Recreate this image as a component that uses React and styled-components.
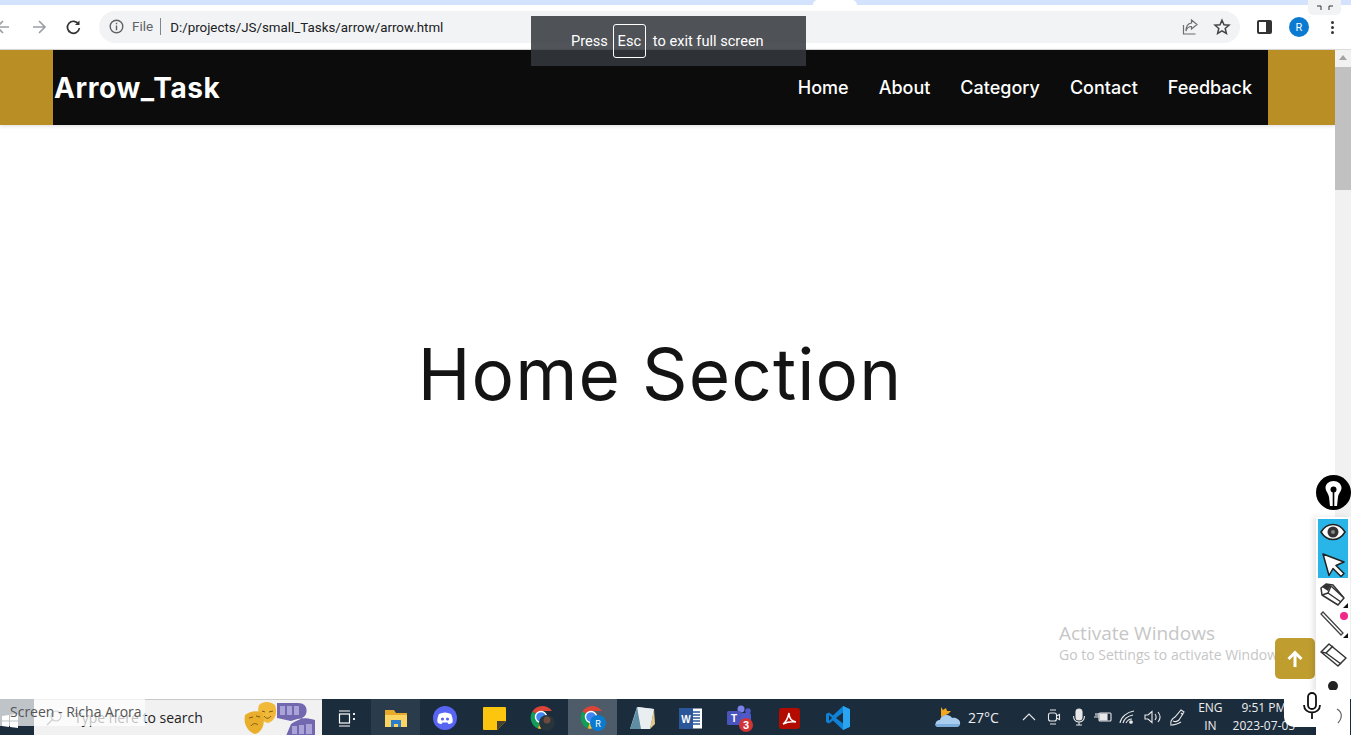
import styled, { createGlobalStyle } from "styled-components";

const GlobalStyle = createGlobalStyle`
  html, body {
    margin: 0;
    padding: 0;
    background: #fff;
    overflow: hidden;
  }
  * {
    box-sizing: border-box;
  }
`;

const Screen = styled.div`
  position: relative;
  width: 1351px;
  height: 735px;
  overflow: hidden;
  display: flex;
  flex-direction: column;
  font-family: "Inter", "Liberation Sans", sans-serif;
`;

/* browser chrome */
const TabStrip = styled.div`
  height: 5px;
  background: #d3e3fd;
  display: flex;
  flex-shrink: 0;
  padding-left: 813px;
`;
const WhiteTab = styled.div`
  width: 44px;
  background: #fff;
  border-radius: 8px 8px 0 0;
`;
const Toolbar = styled.div`
  height: 45px;
  flex-shrink: 0;
  background: #fff;
  border-bottom: 1px solid #dcdcdc;
  display: flex;
  align-items: center;
  padding: 0 8px 0 0;
`;
const NavIcons = styled.div`
  width: 99px;
  display: flex;
  align-items: center;
  flex-shrink: 0;
`;
const NavButton = styled.div`
  width: 17px;
  height: 16px;
  display: flex;
  margin-left: ${(p) => p.$left}px;
`;
const Omnibox = styled.div`
  width: 1141px;
  height: 32px;
  margin-top: -1px;
  border-radius: 16px;
  background: #f1f3f4;
  display: flex;
  align-items: center;
  padding: 0 9px 0 10px;
`;
const SiteLabel = styled.span`
  font-family: "Roboto", sans-serif;
  font-size: 13.5px;
  color: #5f6368;
  margin-left: 8px;
  padding-right: 7px;
  border-right: 1px solid #80868b;
  line-height: 17px;
`;
const Url = styled.span`
  font-family: "Roboto", sans-serif;
  font-size: 13.35px;
  color: #202124;
  margin-left: 9px;
  padding-top: 1px;
  flex: 1;
`;
const OmniAction = styled.div`
  width: 18px;
  height: 18px;
  margin-left: ${(p) => p.$left || 0}px;
  display: flex;
`;
const ToolbarRight = styled.div`
  display: flex;
  align-items: center;
  margin-left: 17px;
`;
const Avatar = styled.div`
  width: 20px;
  height: 20px;
  border-radius: 50%;
  background: #0a7bd0;
  color: #fff;
  font-family: "Roboto", sans-serif;
  font-size: 11px;
  margin-left: 17px;
  display: flex;
  align-items: center;
  justify-content: center;
`;
const MenuDots = styled.div`
  display: flex;
  flex-direction: column;
  gap: 2px;
  margin-left: 22px;
  span {
    width: 3px;
    height: 3px;
    border-radius: 50%;
    background: #333;
  }
`;

/* page */
const Viewport = styled.div`
  flex: 1;
  min-height: 0;
  display: flex;
`;
const Page = styled.div`
  flex: 1;
  display: flex;
  flex-direction: column;
  background: #fff;
`;
const Header = styled.header`
  height: 75px;
  flex-shrink: 0;
  background: #b98e24;
  padding: 0 67px 0 53px;
  box-shadow: 0 1px 4px rgba(0, 0, 0, 0.14);
`;
const HeaderInner = styled.div`
  height: 100%;
  background: #0c0c0c;
  display: flex;
  align-items: center;
  justify-content: space-between;
  padding: 0 16px 0 1px;
`;
const Logo = styled.div`
  color: #fff;
  font-size: 28px;
  font-weight: 700;
  letter-spacing: 0.6px;
`;
const NavLinks = styled.nav`
  display: flex;
  gap: 30px;
`;
const NavLink = styled.a`
  color: #fff;
  font-size: 18px;
  font-weight: 500;
`;
const HomeSection = styled.section`
  flex: 1;
  display: flex;
  justify-content: center;
  padding: 199px 15px 0 0;
`;
const Title = styled.h1`
  margin: 0;
  font-size: 71px;
  font-weight: 400;
  letter-spacing: 1.1px;
  line-height: 100px;
  color: #141414;
`;
const Scrollbar = styled.div`
  width: 16px;
  flex-shrink: 0;
  background: #f1f1f1;
  display: flex;
  flex-direction: column;
  align-items: center;
  padding-top: 5px;
`;
const ScrollArrow = styled.div`
  width: 0;
  height: 0;
  border-left: 4px solid transparent;
  border-right: 4px solid transparent;
  border-bottom: 5px solid #a3a3a3;
`;
const ScrollThumb = styled.div`
  width: 100%;
  height: 123px;
  margin-top: 7px;
  background: #c1c1c1;
`;

/* windows taskbar */
const Taskbar = styled.div`
  height: 36px;
  flex-shrink: 0;
  background: #1b2c3d;
  display: flex;
  color: #fff;
`;
const StartButton = styled.div`
  width: 34px;
  flex-shrink: 0;
  padding: 13px 0 0 2px;
`;
const SearchBox = styled.div`
  width: 288px;
  flex-shrink: 0;
  background: #f1f1f1;
  border-top: 1px solid #c9c9c9;
  display: flex;
  align-items: center;
  padding-left: 12px;
  gap: 12px;
  position: relative;
`;
const SearchText = styled.span`
  font-family: "Open Sans", sans-serif;
  font-size: 14px;
  color: #222;
`;
const SearchArt = styled.div`
  position: absolute;
  left: 210px;
  top: 0;
  display: flex;
`;
const TaskIcon = styled.div`
  width: 49.2px;
  flex-shrink: 0;
  display: flex;
  align-items: center;
  justify-content: center;
  padding-top: 2px;
  background: ${(p) =>
    p.$active ? "#4d5c68" : p.$open ? "#2a3c4b" : "transparent"};
`;
const Tray = styled.div`
  display: flex;
  align-items: center;
  padding-left: 72px;
`;
const Temp = styled.span`
  font-family: "Open Sans", sans-serif;
  font-size: 14px;
  margin: 0 20px 0 7px;
  width: 29px;
  color: #eee;
  white-space: nowrap;
`;
const TrayIcon = styled.div`
  width: 24.7px;
  height: 20px;
  display: flex;
  justify-content: center;
  align-items: center;
`;
const TrayText = styled.div`
  font-family: "Open Sans", sans-serif;
  font-size: 12px;
  line-height: 18px;
  text-align: center;
  color: #eee;
  margin-left: ${(p) => p.$left}px;
  width: ${(p) => p.$width}px;
  white-space: nowrap;
  display: flex;
  flex-direction: column;
  align-items: center;
`;

/* things lying over the page */
const ExitToast = styled.div`
  position: absolute;
  left: 531px;
  top: 16px;
  width: 275px;
  height: 50px;
  background: rgba(52, 56, 62, 0.86);
  color: #fff;
  font-family: "Roboto", sans-serif;
  font-size: 14.6px;
  display: flex;
  align-items: center;
  padding-left: 40px;
`;
const EscKey = styled.span`
  width: 33px;
  height: 34px;
  margin: 0 7px 0 5px;
  border: 1px solid #fff;
  border-radius: 3px;
  display: flex;
  align-items: center;
  justify-content: center;
`;
const ExitCorner = styled.div`
  position: absolute;
  left: 1308px;
  top: 0;
  width: 33px;
  height: 15px;
  background: #f1f3f4;
  border-radius: 0 0 5px 5px;
  display: flex;
  justify-content: center;
`;
const Watermark = styled.div`
  position: absolute;
  left: 1059px;
  top: 621px;
  color: #c6c6c6;
  font-family: "Open Sans", sans-serif;
  white-space: nowrap;
`;
const WatermarkTitle = styled.div`
  font-size: 19px;
  line-height: 24px;
`;
const WatermarkSub = styled.div`
  font-size: 14px;
  line-height: 20px;
`;
const ScrollTopButton = styled.button`
  position: absolute;
  left: 1275px;
  top: 638px;
  width: 40px;
  height: 41px;
  border: 0;
  padding: 0;
  border-radius: 5px;
  background: rgba(187, 151, 34, 0.94);
  display: flex;
  align-items: center;
  justify-content: center;
`;
const PenBadge = styled.div`
  position: absolute;
  left: 1316px;
  top: 475px;
  width: 35px;
  height: 35px;
  display: flex;
`;
const Palette = styled.div`
  position: absolute;
  left: 1316px;
  top: 517px;
  width: 34px;
  height: 218px;
  background: #fff;
  box-shadow: -3px 0 5px rgba(0, 0, 0, 0.1);
  padding: 2px;
  display: flex;
  flex-direction: column;
  align-items: center;
`;
const PaletteActive = styled.div`
  width: 30px;
  height: 59px;
  margin-bottom: 3px;
  padding: 4px 0 1px;
  background: #29b5e8;
  display: flex;
  flex-direction: column;
  align-items: center;
  justify-content: space-between;
  flex-shrink: 0;
`;
const PaletteTool = styled.div`
  width: 30px;
  height: 30px;
  flex-shrink: 0;
  display: flex;
  position: relative;
`;
const PinkDot = styled.span`
  position: absolute;
  right: 0;
  top: 1px;
  width: 8px;
  height: 8px;
  border-radius: 50%;
  background: #f0288a;
`;
const SizeDot = styled.span`
  width: 10px;
  height: 10px;
  border-radius: 50%;
  background: #222;
  margin-top: 10px;
  flex-shrink: 0;
`;
const MicPanel = styled.div`
  position: absolute;
  left: 1284px;
  top: 690px;
  width: 52px;
  height: 37px;
  background: #fff;
  border-radius: 0 0 0 10px;
  display: flex;
  align-items: center;
  justify-content: center;
  padding: 0 0 5px 4px;
`;
const PaletteChevron = styled.div`
  position: absolute;
  left: 1336px;
  top: 708px;
  display: flex;
`;
const ScreenTip = styled.div`
  position: absolute;
  left: 0;
  top: 696px;
  width: 145px;
  height: 30px;
  background: rgba(255, 255, 255, 0.72);
  color: #555;
  font-family: "Open Sans", sans-serif;
  font-size: 14px;
  padding: 6px 0 0 10px;
  white-space: nowrap;
`;

const Back = () => (
  <svg width="17" height="16" viewBox="0 0 17 16" fill="none" stroke="#9aa0a6" strokeWidth="1.7">
    <path d="M13 8H1M7 2 1 8l6 6" />
  </svg>
);
const Forward = () => (
  <svg width="17" height="16" viewBox="0 0 17 16" fill="none" stroke="#9aa0a6" strokeWidth="1.7">
    <path d="M2 8h12M8 2l6 6-6 6" />
  </svg>
);
const Reload = () => (
  <svg width="17" height="16" viewBox="0 0 17 16" fill="none" stroke="#333" strokeWidth="1.7">
    <path d="M13.6 5.2A6 6 0 1 0 14.4 9" />
    <path d="M14.5 1.5v4.5H10" fill="#333" stroke="none" />
  </svg>
);
const Info = () => (
  <svg width="15" height="15" viewBox="0 0 15 15" fill="none" stroke="#5f6368" strokeWidth="1.4">
    <circle cx="7.5" cy="7.5" r="6.3" />
    <path d="M7.5 6.6v4.6M7.5 3.7v1.5" />
  </svg>
);
const Share = () => (
  <svg width="18" height="18" viewBox="0 0 18 18" fill="none" stroke="#6b6f73" strokeWidth="1.2">
    <path d="M2.5 7v9h12" />
    <path d="M10.5 2l5.5 4.5-5.5 4.500V8.500C7.500 8.500 5.800 10 5 13c0-4.500 2-7.500 5.500-8z" />
  </svg>
);
const Star = () => (
  <svg width="18" height="18" viewBox="0 0 18 18" fill="none" stroke="#444" strokeWidth="1.5">
    <path d="M9 2.200l2 4.600 5 .4-3.800 3.300 1.200 4.900L9 12.800l-4.400 2.600 1.200-4.900L2 7.200l5-.4z" />
  </svg>
);
const SidePanel = () => (
  <svg width="15" height="14" viewBox="0 0 15 14">
    <rect width="15" height="14" rx="2" fill="#333" />
    <rect x="2" y="2" width="7" height="10" fill="#fff" />
  </svg>
);
const ExitGlyph = () => (
  <svg width="18" height="12" viewBox="0 0 18 12" fill="none" stroke="#333" strokeWidth="1">
    <path d="M1 6h4v4M17 6h-4v4" />
  </svg>
);
const WindowsLogo = () => (
  <svg width="16" height="14" viewBox="0 0 16 14" fill="#fff">
    <path d="M0 2l7-1v5.500H0zM8 .8 16 0v6.500H8zM0 7.500h7V13l-7-1zM8 7.500h8V14l-8-1z" />
  </svg>
);
const Magnifier = () => (
  <svg width="16" height="16" viewBox="0 0 16 16" fill="none" stroke="#555" strokeWidth="1.2">
    <circle cx="10" cy="6" r="5" />
    <path d="M6.500 9.500 1 15" />
  </svg>
);
const Masks = () => (
  <svg width="74" height="36" viewBox="0 0 74 36">
    <path d="M33 3H54C61 3 64 8 62 14C60 19 52 20 47 24L42 36H71V20C62 17 54 18 47 21L33 18z" fill="#7268b0" />
    <path d="M36 6h5v9h-5zM43 6h5v9h-5zM50 6h5v9h-5zM48 26h5v8h-5zM55 25h5v9h-5zM62 24h6v10h-6z" fill="#aaa3d8" />
    <path d="M15 5c4-4 11-4 16 0 3 8 0 16-7 18-7-1-12-9-9-18z" fill="#f0b93a" />
    <path d="M18 11l3 1M25 12l4-1M20 16c2 3 5 3 7 0" stroke="#7a5a10" fill="none" strokeWidth="1" />
    <path d="M1 15c5-4 12-5 17-2 4 9 1 19-7 21C4 32-1 24 1 15z" fill="#e9ae2c" />
    <path d="M5 18l4-1M12 16l4 1M7 26c2-3 5-3 7-1" stroke="#7a5a10" fill="none" strokeWidth="1" />
  </svg>
);
const TaskView = () => (
  <svg width="18" height="17" viewBox="0 0 18 17" fill="none" stroke="#fff" strokeWidth="1.2">
    <path d="M1 1h11M1 16h11" />
    <rect x="1.500" y="4" width="10" height="9" />
    <path d="M16 3v2M16 8v2" strokeWidth="1.800" />
  </svg>
);
const Explorer = () => (
  <svg width="24" height="20" viewBox="0 0 24 20">
    <path d="M1 2h9l2 3h11v14H1z" fill="#e9a92b" />
    <path d="M1 7h22v12H1z" fill="#fcd462" />
    <path d="M7 12h10v7h-3v-3h-4v3H7z" fill="#2b7cc9" />
  </svg>
);
const Discord = () => (
  <svg width="24" height="24" viewBox="0 0 24 24">
    <circle cx="12" cy="12" r="12" fill="#5865f2" />
    <path d="M6 8c4-2 8-2 12 0 1.500 3 2 6 1.500 8.500-1.500 1-3 1.500-4 1.500l-1-1.500h-5L8.500 18c-1 0-2.500-.5-4-1.500C4 14 4.500 11 6 8z" fill="#fff" />
    <circle cx="9.500" cy="13" r="1.600" fill="#5865f2" />
    <circle cx="14.500" cy="13" r="1.600" fill="#5865f2" />
  </svg>
);
const Sticky = () => (
  <svg width="23" height="23" viewBox="0 0 23 23">
    <path d="M0 1a1 1 0 0 1 1-1h21a1 1 0 0 1 1 1v13l-9 9H1a1 1 0 0 1-1-1z" fill="#fcc60e" />
    <path d="M14 23v-9h9z" fill="#4a4030" />
  </svg>
);
const Chrome = ({ badge }) => (
  <svg width="28" height="26" viewBox="0 0 28 26">
    <path d="M12 12 3.300 6.500A12 12 0 0 1 23 6H12z" fill="#db4437" />
    <path d="M12 12 3.300 6.500A12 12 0 0 0 9 23.600z" fill="#0f9d58" />
    <path d="M12 12h11a12 12 0 0 1-14 11.600z" fill="#fbc02d" />
    <circle cx="12" cy="12" r="5.500" fill="#4285f4" stroke="#fff" strokeWidth="1.400" />
    {badge === "photo" && (
      <>
        <circle cx="18" cy="18" r="8" fill="#26343c" />
        <circle cx="18" cy="15" r="3.500" fill="#6d4a3b" />
      </>
    )}
    {badge === "letter" && (
      <>
        <circle cx="19" cy="18" r="8" fill="#0a7bd0" />
        <text x="19" y="21.500" fontSize="9" fill="#fff" textAnchor="middle" fontFamily="Roboto, sans-serif">R</text>
      </>
    )}
  </svg>
);
const Notepad = () => (
  <svg width="26" height="26" viewBox="0 0 26 26">
    <path d="M8 2l17 2-4 20H1z" fill="#b7d7e6" />
    <path d="M9 2l16 2-4 20H9z" fill="#e9eef0" />
    <path d="M21 24l4-20 1 15z" fill="#e3c88a" />
    <path d="M1 24c3-8 5-14 7-22l4 22z" fill="#5f8ea3" />
  </svg>
);
const Word = () => (
  <svg width="23" height="21" viewBox="0 0 23 21">
    <rect x="6" y="0.500" width="17" height="20" fill="#fff" />
    <path d="M13 4h8M13 7h8M13 10h8M13 13h8M13 16h8" stroke="#2b579a" strokeWidth="1.300" />
    <rect width="14" height="21" fill="#2b579a" />
    <text x="7" y="14.500" fontSize="10" fontWeight="700" fill="#fff" textAnchor="middle" fontFamily="Liberation Sans, sans-serif">W</text>
  </svg>
);
const Teams = () => (
  <svg width="28" height="28" viewBox="0 0 28 28">
    <circle cx="15" cy="5" r="3.500" fill="#7b83eb" />
    <circle cx="22" cy="7" r="2.800" fill="#5059c9" />
    <rect x="14" y="9" width="11" height="11" rx="2" fill="#5059c9" />
    <rect x="1" y="7" width="14" height="14" rx="1.500" fill="#4b53bc" />
    <text x="8" y="18" fontSize="10" fontWeight="700" fill="#fff" textAnchor="middle" fontFamily="Liberation Sans, sans-serif">T</text>
    <circle cx="20" cy="21" r="7" fill="#d13438" />
    <text x="20" y="25" fontSize="11" fontWeight="700" fill="#fff" textAnchor="middle" fontFamily="Liberation Sans, sans-serif">3</text>
  </svg>
);
const Acrobat = () => (
  <svg width="21" height="21" viewBox="0 0 21 21">
    <rect width="21" height="21" rx="3" fill="#b30b00" />
    <path d="M4 16c3-2 5-6 6-11 0 4 2 8 7 9-5-1-9 0-13 2z" fill="none" stroke="#fff" strokeWidth="1.500" />
  </svg>
);
const VsCode = () => (
  <svg width="24" height="24" viewBox="0 0 24 24">
    <path d="M17 0l7 3.300v17.400L17 24 7 14.500 3 17.500 0 16V8l3-1.500 4 3z" fill="#0f82d6" />
    <path d="M17 6.500 10 12l7 5.500z" fill="#1b2c3d" />
    <path d="M17 0l7 3.300v17.400L17 24z" fill="#2aa3f0" />
    <path d="M3 9l3 3-3 3z" fill="#1b2c3d" />
  </svg>
);
const Weather = () => (
  <svg width="26" height="24" viewBox="0 0 26 24">
    <path d="M6 2l2 3 3-2 1 3 4 0-3 3-7 3z" fill="#f2a71e" />
    <path d="M3 22c-4-1-3-7 2-7 1-5 9-7 12-2 5-1 9 3 8 6-1 2-2 3-4 3z" fill="#a9cdef" />
    <path d="M3 22c-2 0-3-2-3-3h25c0 1-1 3-4 3z" fill="#7eaedd" />
  </svg>
);
const TrayStroke = ({ children, w = 18, h = 18 }) => (
  <svg width={w} height={h} viewBox={`0 0 ${w} ${h}`} fill="none" stroke="#e8e8e8" strokeWidth="1.100">
    {children}
  </svg>
);

const taskIcons = [
  { id: "view", node: <TaskView /> },
  { id: "files", node: <Explorer />, open: true },
  { id: "discord", node: <Discord /> },
  { id: "sticky", node: <Sticky /> },
  { id: "chrome1", node: <Chrome badge="photo" /> },
  { id: "chrome2", node: <Chrome badge="letter" />, active: true },
  { id: "notepad", node: <Notepad /> },
  { id: "word", node: <Word /> },
  { id: "teams", node: <Teams /> },
  { id: "acrobat", node: <Acrobat /> },
  { id: "code", node: <VsCode /> },
];

const navItems = ["Home", "About", "Category", "Contact", "Feedback"];

const App = () => {
  return (
    <>
      <GlobalStyle />
      <Screen>
        <TabStrip>
          <WhiteTab />
        </TabStrip>
        <Toolbar>
          <NavIcons>
            <NavButton $left={-4}>
              <Back />
            </NavButton>
            <NavButton $left={18}>
              <Forward />
            </NavButton>
            <NavButton $left={17}>
              <Reload />
            </NavButton>
          </NavIcons>
          <Omnibox>
            <Info />
            <SiteLabel>File</SiteLabel>
            <Url>D:/projects/JS/small_Tasks/arrow/arrow.html</Url>
            <OmniAction>
              <Share />
            </OmniAction>
            <OmniAction $left={14}>
              <Star />
            </OmniAction>
          </Omnibox>
          <ToolbarRight>
            <SidePanel />
            <Avatar>R</Avatar>
            <MenuDots>
              <span />
              <span />
              <span />
            </MenuDots>
          </ToolbarRight>
        </Toolbar>
        <Viewport>
          <Page>
            <Header>
              <HeaderInner>
                <Logo>Arrow_Task</Logo>
                <NavLinks>
                  {navItems.map((item) => (
                    <NavLink key={item}>{item}</NavLink>
                  ))}
                </NavLinks>
              </HeaderInner>
            </Header>
            <HomeSection>
              <Title>Home Section</Title>
            </HomeSection>
          </Page>
          <Scrollbar>
            <ScrollArrow />
            <ScrollThumb />
          </Scrollbar>
        </Viewport>
        <Taskbar>
          <StartButton>
            <WindowsLogo />
          </StartButton>
          <SearchBox>
            <Magnifier />
            <SearchText>Type here to search</SearchText>
            <SearchArt>
              <Masks />
            </SearchArt>
          </SearchBox>
          {taskIcons.map((icon) => (
            <TaskIcon key={icon.id} $open={icon.open} $active={icon.active}>
              {icon.node}
            </TaskIcon>
          ))}
          <Tray>
            <Weather />
            <Temp>27°C</Temp>
            <TrayIcon>
              <TrayStroke w={14} h={10}>
                <path d="M1 8l6-6 6 6" />
              </TrayStroke>
            </TrayIcon>
            <TrayIcon>
              <TrayStroke w={14} h={18}>
                <rect x="1.500" y="5" width="8" height="8" rx="2" />
                <path d="M9.500 8l3-1.500v5l-3-1.500M3 2h6M3 16h6" />
              </TrayStroke>
            </TrayIcon>
            <TrayIcon>
              <TrayStroke w={14} h={18}>
                <rect x="4" y="1" width="6" height="11" rx="3" fill="#e8e8e8" />
                <path d="M1.500 8c0 8 11 8 11 0M7 14v3M4 17h6" />
              </TrayStroke>
            </TrayIcon>
            <TrayIcon>
              <TrayStroke w={18} h={14}>
                <rect x="5" y="3" width="12" height="8" rx="1" />
                <rect x="6" y="4" width="7" height="6" fill="#e8e8e8" />
                <path d="M0 7h5M2 3v3M4 3v3" />
              </TrayStroke>
            </TrayIcon>
            <TrayIcon>
              <TrayStroke w={18} h={16}>
                <path d="M1 14C2 8 8 3 15 2M4 14c1-4 5-7 10-8M7 14c1-2 3-4 6-4" />
                <circle cx="12" cy="13" r="1.300" fill="#e8e8e8" />
              </TrayStroke>
            </TrayIcon>
            <TrayIcon>
              <TrayStroke w={18} h={16}>
                <path d="M1 6h3l4-3.500v11L4 10H1zM11 5c1.500 2 1.500 4 0 6M14 3c2.500 3 2.500 7 0 10" />
              </TrayStroke>
            </TrayIcon>
            <TrayIcon>
              <TrayStroke w={18} h={18}>
                <path d="M2 16c-1-3 1-5 4-7l6-7 3 2-5 8c-2 2-4 2-6 1M12 5l2 2M1 17c5 0 8-1 11-3" />
              </TrayStroke>
            </TrayIcon>
            <TrayText $left={9} $width={23}>
              <span>ENG</span>
              <span>IN</span>
            </TrayText>
            <TrayText $left={13} $width={58}>
              <span>9:51 PM</span>
              <span>2023-07-05</span>
            </TrayText>
          </Tray>
        </Taskbar>

        <ExitCorner>
          <ExitGlyph />
        </ExitCorner>
        <ExitToast>
          Press
          <EscKey>Esc</EscKey>
          to exit full screen
        </ExitToast>
        <ScreenTip>Screen - Richa Arora</ScreenTip>
        <Watermark>
          <WatermarkTitle>Activate Windows</WatermarkTitle>
          <WatermarkSub>Go to Settings to activate Windows.</WatermarkSub>
        </Watermark>
        <ScrollTopButton>
          <svg width="18" height="18" viewBox="0 0 18 18" fill="none" stroke="#fff" strokeWidth="3">
            <path d="M9 17V3M2.500 9 9 2.500 15.500 9" />
          </svg>
        </ScrollTopButton>
        <PenBadge>
          <svg width="35" height="35" viewBox="0 0 35 35">
            <circle cx="17.500" cy="17.500" r="17.500" fill="#000" />
            <path d="M17.500 6c4.500 0 8 3 8 7 0 3-3 5.500-3.500 9l-1 9h-7l-1-9c-.5-3.500-3.500-6-3.500-9 0-4 3.500-7 8-7z" fill="#fff" />
            <circle cx="17.500" cy="14.500" r="3" fill="#000" />
            <path d="M17.500 15v16" stroke="#000" strokeWidth="1.600" />
          </svg>
        </PenBadge>
        <Palette>
          <PaletteActive>
            <svg width="26" height="18" viewBox="0 0 26 18">
              <path d="M1 9c6-10 18-10 24 0-6 10-18 10-24 0z" fill="#fff" stroke="#222" strokeWidth="1.500" />
              <circle cx="13" cy="9" r="5.500" fill="#333" />
              <circle cx="13" cy="9" r="2" fill="#888" />
            </svg>
            <svg width="26" height="25" viewBox="0 0 26 25">
              <path d="M3 2l21 8-8 3.500 8 8-3 3-8-8-4 7z" fill="#fff" stroke="#222" strokeWidth="1.500" strokeLinejoin="round" />
            </svg>
          </PaletteActive>
          <PaletteTool>
            <svg width="30" height="30" viewBox="0 0 30 30" fill="none" stroke="#333" strokeWidth="1.500" strokeLinejoin="round">
              <path d="M3 7l5-4 7 1 11 13-6 7L4 14z" />
              <path d="M4 14l6-2 3-7M10 12l13 9M13 5l12 11" />
              <path d="M4 6l4-3 5 1-3 6z" fill="#333" stroke="none" />
              <path d="M31 21v6h-6z" fill="#111" stroke="none" />
            </svg>
          </PaletteTool>
          <PaletteTool>
            <PinkDot />
            <svg width="30" height="30" viewBox="0 0 30 30" fill="none" stroke="#444" strokeWidth="1.300">
              <path d="M3 3l2-2 20 21-2 2z" />
              <path d="M31 21v6h-6z" fill="#111" stroke="none" />
            </svg>
          </PaletteTool>
          <PaletteTool>
            <svg width="30" height="30" viewBox="0 0 30 30" fill="none" stroke="#333" strokeWidth="1.500" strokeLinejoin="round">
              <path d="M3 11l8-8 17 14-8 8z" />
              <path d="M3 11l5 1 7-7M8 12l15 11" />
            </svg>
          </PaletteTool>
          <SizeDot />
        </Palette>
        <PaletteChevron>
          <svg width="8" height="16" viewBox="0 0 8 16" fill="none" stroke="#666" strokeWidth="1.200">
            <path d="M1 1c5 3 6 8 1 14" />
          </svg>
        </PaletteChevron>
        <MicPanel>
          <svg width="20" height="28" viewBox="0 0 20 28" fill="none" stroke="#111" strokeWidth="1.800">
            <rect x="6" y="1" width="8" height="16" rx="4" />
            <path d="M2 13c0 10 16 10 16 0M10 21v6" />
          </svg>
        </MicPanel>
      </Screen>
    </>
  );
};
export default App;
